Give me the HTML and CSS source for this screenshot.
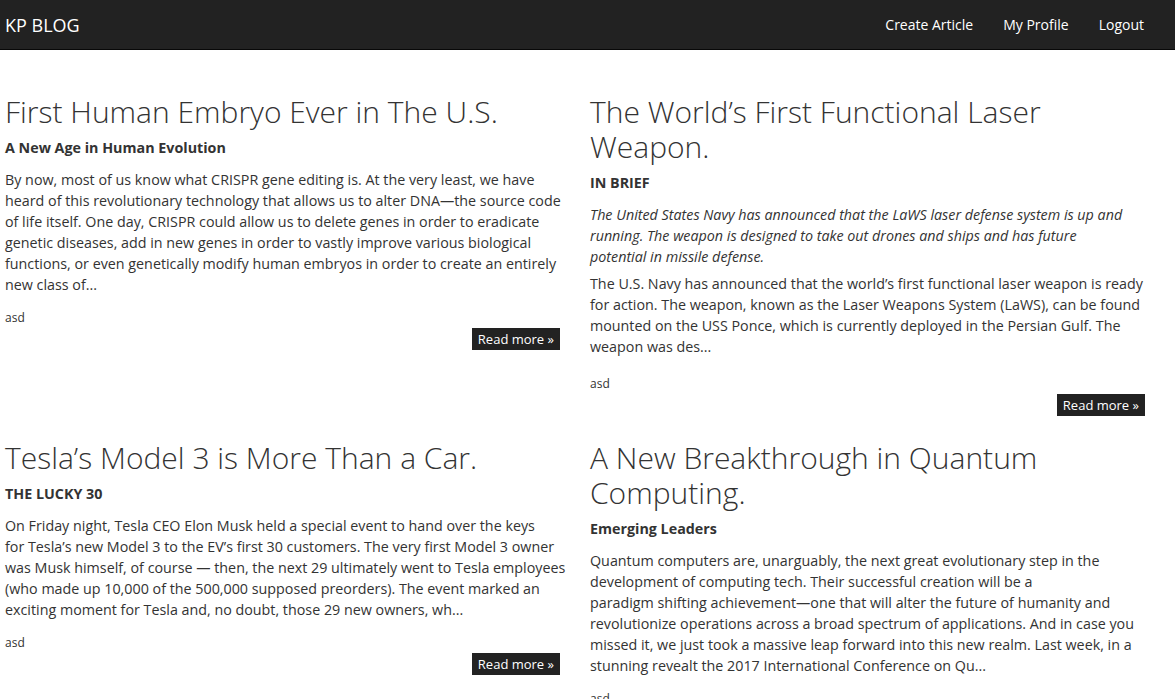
FILE: index.html
```html
<!DOCTYPE html>
<html lang="en">
<head>
<meta charset="utf-8">
<title>KP BLOG</title>
<link rel="stylesheet" href="styles.css">
</head>
<body>
<header class="navbar">
  <a class="brand" href="#">KP BLOG</a>
  <nav class="nav-links">
    <a href="#">Create Article</a>
    <a href="#">My Profile</a>
    <a href="#">Logout</a>
  </nav>
</header>
<main class="posts">
  <article class="post">
    <h2 class="post-title">First Human Embryo Ever in The U.S.</h2>
    <h4 class="post-sub">A New Age in Human Evolution</h4>
    <div class="post-body">By now, most of us know what CRISPR gene editing is. At the very least, we have heard of this revolutionary technology that allows us to alter DNA—the source code of life itself. One day, CRISPR could allow us to delete genes in order to eradicate genetic diseases, add in new genes in order to vastly improve various biological functions, or even genetically modify human embryos in order to create an entirely new class of...</div>
    <p class="post-author">asd</p>
    <div class="post-actions"><a class="btn" href="#">Read more »</a></div>
  </article>
  <article class="post">
    <h2 class="post-title">The World’s First Functional Laser Weapon.</h2>
    <h4 class="post-sub">IN BRIEF</h4>
    <div class="post-body">
      <p><em>The United States Navy has announced that the LaWS laser defense system is up and running. The weapon is designed to take out drones and ships and has future<br>potential in missile defense.</em></p>
      <p>The U.S. Navy has announced that the world’s first functional laser weapon is ready for action. The weapon, known as the Laser Weapons System (LaWS), can be found mounted on the USS Ponce, which is currently deployed in the Persian Gulf. The weapon was des...</p>
    </div>
    <p class="post-author">asd</p>
    <div class="post-actions"><a class="btn" href="#">Read more »</a></div>
  </article>
  <article class="post">
    <h2 class="post-title">Tesla’s Model 3 is More Than a Car.</h2>
    <h4 class="post-sub">THE LUCKY 30</h4>
    <div class="post-body">On Friday night, Tesla CEO Elon Musk held a special event to hand over the keys<br>for Tesla’s new Model 3 to the EV’s first 30 customers. The very first Model 3 owner was Musk himself, of course — then, the next 29 ultimately went to Tesla employees (who made up 10,000 of the 500,000 supposed preorders). The event marked an exciting moment for Tesla and, no doubt, those 29 new owners, wh...</div>
    <p class="post-author">asd</p>
    <div class="post-actions"><a class="btn" href="#">Read more »</a></div>
  </article>
  <article class="post">
    <h2 class="post-title">A New Breakthrough in Quantum Computing.</h2>
    <h4 class="post-sub">Emerging Leaders</h4>
    <div class="post-body">Quantum computers are, unarguably, the next great evolutionary step in the development of computing tech. Their successful creation will be a<br>paradigm shifting achievement—one that will alter the future of humanity and revolutionize operations across a broad spectrum of applications. And in case you missed it, we just took a massive leap forward into this new realm. Last week, in a stunning revealt the 2017 International Conference on Qu...</div>
    <p class="post-author">asd</p>
    <div class="post-actions"><a class="btn" href="#">Read more »</a></div>
  </article>
</main>
</body>
</html>
```

FILE: styles.css
```css
* { box-sizing: border-box; }

html, body {
  margin: 0;
  padding: 0;
  background: #fff;
}

body {
  font-family: "Open Sans", "Noto Sans", "Liberation Sans", sans-serif;
  font-size: 14.3px;
  line-height: 21px;
  color: #333;
}

.navbar {
  height: 50px;
  background: #222;
  border-bottom: 1px solid #080808;
  display: flex;
  align-items: center;
  justify-content: space-between;
  padding: 0 16px 0 5px;
}

.brand {
  color: #fff;
  text-decoration: none;
  font-size: 18px;
  line-height: 20px;
}

.nav-links {
  display: flex;
}

.nav-links a {
  color: #fff;
  text-decoration: none;
  font-size: 14px;
  line-height: 20px;
  padding: 0 15px;
}

.posts {
  display: grid;
  grid-template-columns: 566px 566px;
  column-gap: 19px;
  row-gap: 24px;
  padding: 44px 19px 0 5px;
}

.post-title {
  margin: 0 0 8px;
  font-weight: 300;
  font-size: 30px;
  line-height: 35px;
  color: #333;
}

.post-sub {
  margin: 0 0 11px;
  font-weight: 700;
  font-size: 14.3px;
  line-height: 21px;
}

.post-body {
  display: flow-root;
  margin-bottom: 14px;
}

.post-body p {
  margin: 0 0 6px;
}

.post-body p:last-child {
  margin-bottom: 4px;
}

.post-author {
  margin: 0 0 1px;
  font-size: 12px;
  line-height: 18px;
}

.post-actions {
  display: flex;
  justify-content: flex-end;
  padding-right: 11px;
}

.btn {
  display: inline-block;
  background: #222;
  color: #fff;
  text-decoration: none;
  font-size: 13px;
  line-height: 18px;
  padding: 2px 6px;
}
```
